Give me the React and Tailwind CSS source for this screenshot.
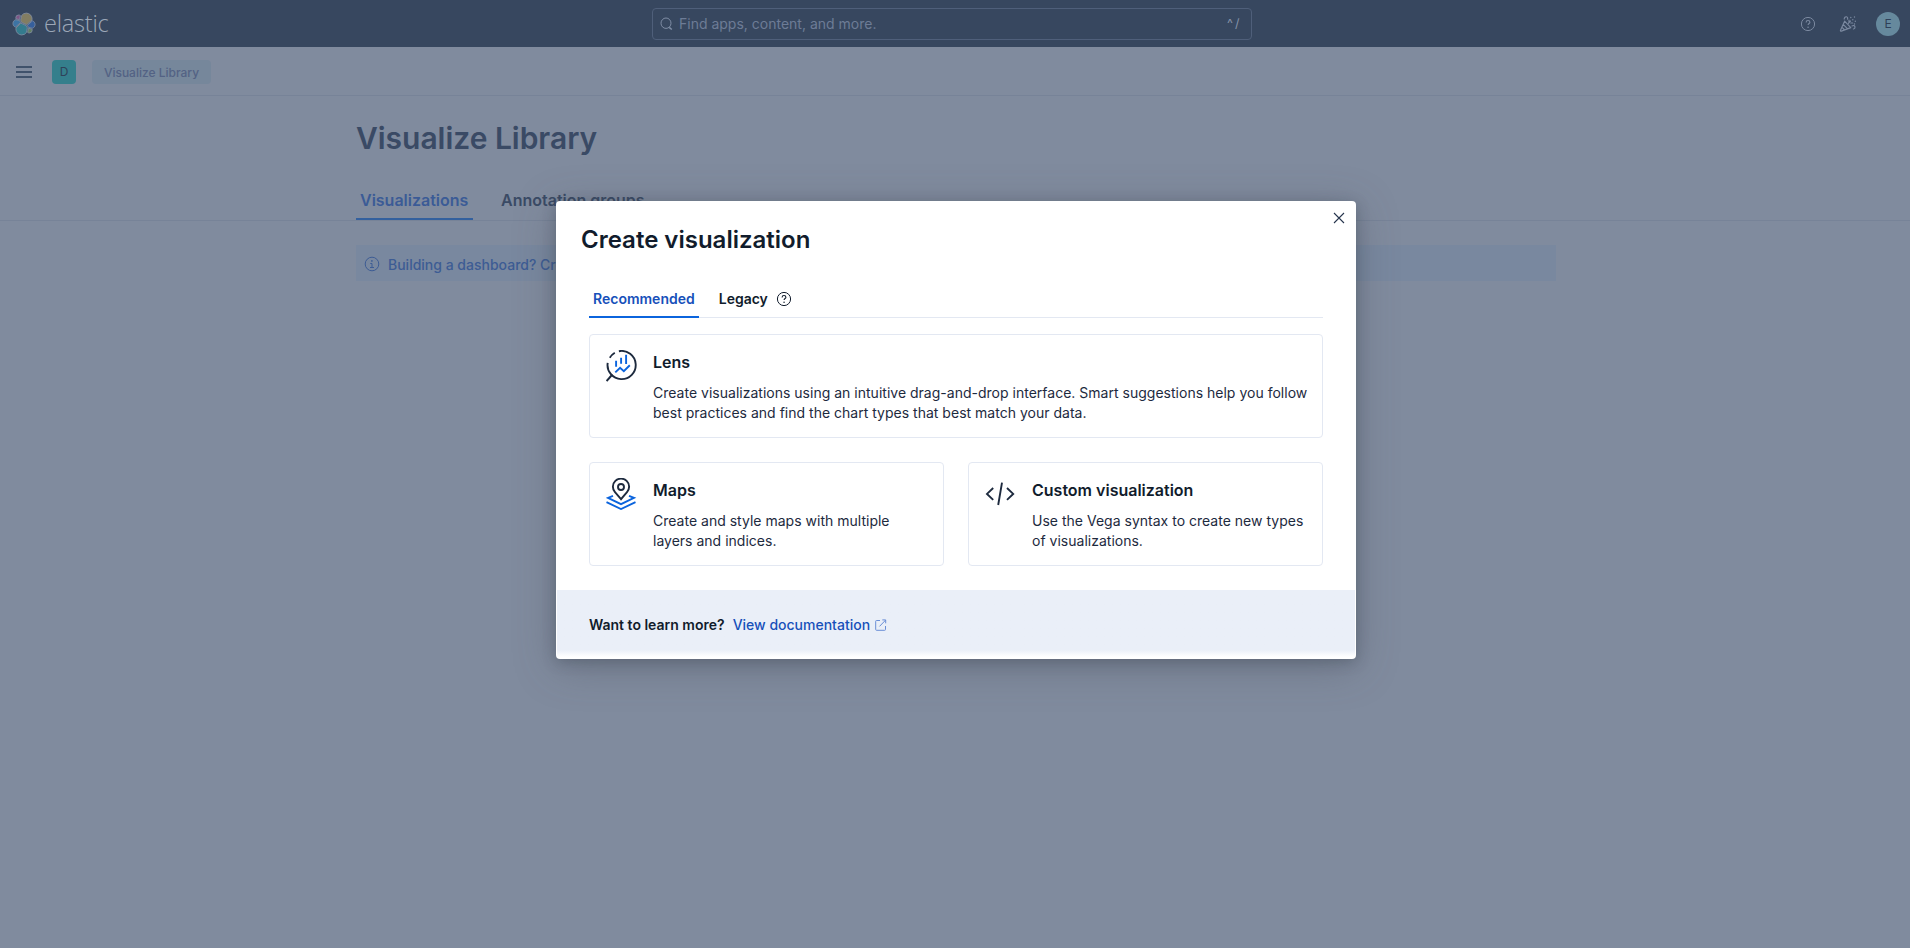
import React from "react";

const ElasticLogo = () => (
  <svg width="24" height="24" viewBox="0 0 32 32" stroke="#7f8da3" strokeWidth="1.1">
    <path fill="#827d62" d="M12.58 13.787l7.002 3.211 7.066-6.213a7.849 7.849 0 00.152-1.557c0-4.287-3.464-7.774-7.722-7.774a7.699 7.699 0 00-6.363 3.359l-1.176 6.118 1.041 2.856z" />
    <path fill="#347b8d" d="M5.333 21.228A7.964 7.964 0 005.18 22.8c0 4.3 3.476 7.797 7.748 7.797a7.735 7.735 0 006.407-3.394l1.166-6.1-1.556-2.985-7.03-3.21-6.582 6.32z" />
    <path fill="#7d5686" d="M5.288 9.067l4.8 1.137L11.14 4.73a3.785 3.785 0 00-2.28-.766A3.806 3.806 0 005.058 7.77c0 .443.078.877.23 1.297z" />
    <path fill="#3d74a4" d="M4.872 10.214c-2.145.713-3.642 2.771-3.642 5.04 0 2.209 1.361 4.182 3.405 4.962l6.733-6.11-1.236-2.653-5.26-1.239z" />
    <path fill="#637f60" d="M20.872 27.194a3.777 3.777 0 002.27.769 3.806 3.806 0 003.802-3.806c0-.442-.077-.876-.229-1.297l-4.796-1.126-1.047 5.46z" />
    <path fill="#365f9c" d="M21.852 20.471l5.28 1.238c2.145-.712 3.642-2.77 3.642-5.04 0-2.205-1.364-4.175-3.412-4.956l-6.905 6.07 1.395 2.688z" />
  </svg>
);

const HelpIcon = () => (
  <svg width="16" height="16" viewBox="0 0 16 16" fill="none" stroke="currentColor">
    <circle cx="8" cy="8" r="6.6" />
    <path d="M6.1 6.4C6.1 5.2 6.9 4.5 8 4.5s1.9.7 1.9 1.7c0 1.3-1.8 1.4-1.8 2.9" strokeWidth="1.1" />
    <circle cx="8.05" cy="11.2" r=".75" fill="currentColor" stroke="none" />
  </svg>
);

const InfoIcon = () => (
  <svg width="16" height="16" viewBox="0 0 16 16" fill="none" stroke="currentColor">
    <circle cx="8" cy="8" r="6.8" />
    <path d="M6.3 7.5H8v4M6 11.5h4" />
    <circle cx="7.9" cy="4.9" r=".85" fill="currentColor" stroke="none" />
  </svg>
);

const CheerIcon = () => (
  <svg width="18" height="18" viewBox="0 0 18 18" fill="none" stroke="currentColor" strokeWidth="1.15" strokeLinecap="round" strokeLinejoin="round">
    <path d="M5.6 6.2L1.5 15.2c-.3.7.2 1.2.9.9l9.4-3.5zM5.6 6.2l6.2 6.4M4.2 9.4l4.4 4.4M3 12.3l2.7 2.7" />
    <path d="M5.2 4C5.4 2.4 6.3 1.6 7.4 1.8c1.2.2 1.5 1.2 1.1 2.3M9.3 8.3l2.2-2.3M10 5v1.9M11.8 8h1.9M13 10.9c1.5-.9 2.9-.2 3 1.2.1 1.1-.6 1.8-1.6 1.9" />
    <path d="M11.8 2.5v.01M15.5 2v.01M13.8 4.8v.01M16.3 6.3v.01M15.5 9v.01" strokeWidth="1.4" />
  </svg>
);

const SearchIcon = () => (
  <svg width="13" height="14" viewBox="0 0 13 14" fill="none" stroke="#7f8da5">
    <ellipse cx="6" cy="6.2" rx="5" ry="5.2" />
    <path d="M9.2 10.4l2.6 2.1" strokeWidth="1.6" />
  </svg>
);

const LensIcon = () => (
  <svg width="32" height="32" viewBox="0 0 32 32" fill="none" strokeWidth="1.9">
    <g stroke="#1d2a3e">
      <path d="M1.7 12.8A14.1 14.1 0 1 0 12.9 1.2M3.8 7.8A14.1 14.1 0 0 1 8.8 2.8" />
      <path d="M6.3 24.5L.6 31" />
    </g>
    <path stroke="#0b64dd" d="M10.1 10.7v6M15.1 7.7v6M20.1 4.8v9.2M9.3 22.4l4.8-4.5 3.7 3.2 6-5.8" />
  </svg>
);

const MapsIcon = () => (
  <svg width="32" height="32" viewBox="0 0 32 32" fill="none" strokeWidth="1.9">
    <g stroke="#1d2a3e">
      <path d="M15 21.2l-6-7a8.1 8.1 0 1 1 12 0z" />
      <circle cx="15" cy="9" r="3" />
    </g>
    <path stroke="#0b64dd" d="M7 17.8l-5 2.1 13 6.2 13-6.2-5-2.1M.5 24.2L15 31l14.5-6.8" />
  </svg>
);

const CodeIcon = () => (
  <svg width="32" height="32" viewBox="0 0 32 32" fill="none" stroke="#1d2a3e" strokeWidth="1.9">
    <path d="M8.2 10l-6.2 5.9 6.2 6M17 4.6L13.2 27M22 10l6.2 5.9-6.2 6" />
  </svg>
);

const Card = ({ icon, title, children }) => (
  <button className="flex h-[104px] items-start rounded border border-[#e3e8f2] bg-white pt-[15px] pr-3 pl-4 text-left">
    <span className="mr-[15px] h-8 w-8 shrink-0">{icon}</span>
    <span className="block pt-0.5">
      <span className="block text-[16px] leading-[20px] font-semibold text-[#111c2c]">{title}</span>
      <span className="mt-[11px] block text-[14px] leading-[20px] tracking-[0.01px] text-[#1d2a3e]">{children}</span>
    </span>
  </button>
);

const Header = () => (
  <header className="flex h-[47px] items-center bg-[#37475f] pr-[10px] pl-3">
    <div className="flex w-[640px] items-center gap-2">
      <ElasticLogo />
      <span className="-mt-px font-['Open_Sans'] text-[23.5px] leading-6 font-light tracking-[-0.2px] text-[#9ca7b8]">elastic</span>
    </div>
    <div className="mt-px flex h-8 w-[600px] shrink-0 items-center rounded border border-[#4f5f7a] pr-3 pl-[7px] text-[#6d7c96]">
      <SearchIcon />
      <span className="ml-[6px] flex-1 text-[14px] leading-5">Find apps, content, and more.</span>
      <span className="text-[12.5px] leading-5 tracking-[-0.6px] text-[#8592a8]">^ /</span>
    </div>
    <div className="flex flex-1 items-center justify-end text-[#7b89a0]">
      <span className="mt-px"><HelpIcon /></span>
      <span className="mr-[19px] ml-[23px]"><CheerIcon /></span>
      <span className="mt-px flex h-6 w-6 items-center justify-center rounded-full bg-[#66899d] text-[12px] text-[#2f3f58]">E</span>
    </div>
  </header>
);

export default function App() {
  return (
    <div className="h-[948px] overflow-hidden bg-[#808b9e] font-['Inter',sans-serif]">
      <Header />
      <div className="flex h-[49px] items-center border-b border-[#778398] pt-0.5 pl-4">
        <span className="flex h-3 w-4 flex-col justify-between">
          <i className="h-0.5 bg-[#40526b]" />
          <i className="h-0.5 bg-[#40526b]" />
          <i className="h-0.5 bg-[#40526b]" />
        </span>
        <span className="ml-5 flex h-6 w-6 items-center justify-center rounded bg-[#357f8c] text-[12px] text-[#2f4259]">D</span>
        <span className="ml-4 flex h-6 w-[119px] items-center justify-center rounded bg-[#76879b] pt-px text-[12px] font-medium text-[#536284]">Visualize Library</span>
      </div>

      <div className="border-b border-[#778398] pl-[356px]">
        <h1 className="pt-[21px] text-[30px] leading-[42px] font-semibold tracking-[-0.03px] text-[#3a4a65]">Visualize Library</h1>
        <nav className="mt-[20px] flex h-[41px] gap-6 text-[16px] leading-[42px] font-semibold">
          <span className="w-[117px] border-b-2 border-[#33609e] px-1 text-[#3b5b96]">Visualizations</span>
          <span className="px-1 text-[#3a4a65]">Annotation groups</span>
        </nav>
      </div>
      <div className="mt-6 ml-[356px] flex h-9 w-[1200px] items-center gap-2 bg-[#79889f] px-2 pt-0.5 text-[14px] font-medium text-[#3d5c94]">
        <InfoIcon />
        <span>Building a dashboard? Create and add your visualizations right from the Dashboard application.</span>
      </div>

      <div className="absolute top-[201px] left-[556px] flex h-[458px] w-[800px] flex-col rounded bg-white shadow-[0_3px_14px_rgba(45,55,70,0.3),0_8px_40px_rgba(70,75,85,0.36)]">
        <div className="flex h-[77px] justify-between pr-[11px] pl-[25px]">
          <h2 className="pt-[23px] text-[24px] leading-8 font-semibold text-[#111c2c]">Create visualization</h2>
          <svg className="mt-[11px]" width="12" height="12" viewBox="0 0 12 12" stroke="#26354d" strokeWidth="1.1">
            <path d="M1 1l10 10M11 1L1 11" />
          </svg>
        </div>
        <div className="mx-[33px] flex h-10 border-b border-[#e3e8f2] text-[14px] leading-[42px] font-semibold">
          <span className="h-10 border-b-2 border-[#0b64dd] px-1 text-[#1750ba]">Recommended</span>
          <span className="ml-5 text-[#111c2c]">Legacy</span>
          <span className="mt-[3px] ml-2 flex items-center text-[#111c2c]"><HelpIcon /></span>
        </div>
        <div className="mx-[33px] mt-4 grid grid-cols-2 gap-6">
          <div className="col-span-2 grid">
            <Card icon={<LensIcon />} title="Lens">
              Create visualizations using an intuitive drag-and-drop interface. Smart suggestions help you follow best practices and find the chart types that best match your data.
            </Card>
          </div>
          <Card icon={<MapsIcon />} title="Maps">Create and style maps with multiple layers and indices.</Card>
          <Card icon={<CodeIcon />} title="Custom visualization">Use the Vega syntax to create new types of visualizations.</Card>
        </div>
        <div className="mx-px mt-6 flex h-[68px] items-start bg-linear-to-b from-[#eaeff8] from-[60px] to-white to-[67px] pt-[25px] pl-8 text-[14px] leading-5">
          <span className="font-semibold text-[#111c2c]">Want to learn more?</span>
          <span className="ml-2 font-medium text-[#1750ba]">View documentation</span>
          <svg className="mt-1 ml-[5px]" width="12" height="12" viewBox="0 0 12 12" fill="none" stroke="#6a8ed6">
            <path d="M5 1.5H1.5a.8.8 0 0 0-.8.8v8.2a.8.8 0 0 0 .8.8h8.2a.8.8 0 0 0 .8-.8V7M7.3.9h3.4v3.4M10.7 1L4.5 7.4" />
          </svg>
        </div>
      </div>
    </div>
  );
}
